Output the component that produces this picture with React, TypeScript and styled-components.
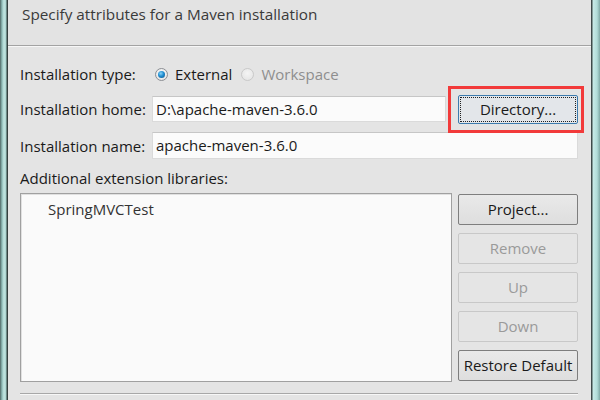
import React from "react";
import styled, { createGlobalStyle } from "styled-components";

const GlobalStyle = createGlobalStyle`
  html, body {
    margin: 0;
    padding: 0;
    background: #e4e4e4;
  }
  #root {
    width: 600px;
    height: 400px;
    overflow: hidden;
  }
`;

const Window = styled.div`
  display: flex;
  width: 600px;
  height: 400px;
  font-family: "Open Sans", "Noto Sans", sans-serif;
  font-size: 15px;
  color: #1a1a1a;
`;

const FrameEdge = styled.div<{ side: "left" | "right" }>`
  flex: 0 0 ${(p) => (p.side === "left" ? "8px" : "9px")};
  background: ${(p) =>
    p.side === "left"
      ? "linear-gradient(90deg, #4f6664 0, #8fbcb8 2px, #c3e6e2 4px, #a9d2ce 6px, #34403f 7px, #34403f 8px)"
      : "linear-gradient(90deg, #3f4a49 0, #3f4a49 1px, #c8ebe7 2px, #b2dcd8 6px, #7fa9a5 9px)"};
`;

const Content = styled.div`
  flex: 1;
  display: flex;
  flex-direction: column;
  background: #e4e4e4;
`;

const Header = styled.div`
  height: 46px;
  padding: 4px 0 0 14px;
  box-sizing: border-box;
  font-size: 15.3px;
  color: #3a3a3a;
  background: #e3e3e3;
  border-bottom: 1px solid #a3a3a3;
  box-shadow: 0 1px 0 #f7f7f7;
`;

const Body = styled.div`
  flex: 1;
  display: flex;
  flex-direction: column;
  padding: 16px 13px 0 12px;
`;

const FormGrid = styled.div`
  display: grid;
  grid-template-columns: 126px 1fr 126px;
  grid-template-rows: 24px 30px 27px;
  column-gap: 6px;
  row-gap: 8px;
  align-items: center;
`;

const Label = styled.label`
  white-space: nowrap;
`;

const RadioGroup = styled.div`
  grid-column: 2 / 4;
  display: flex;
  align-items: center;
  padding-left: 3px;
  gap: 9px;
`;

const RadioOption = styled.div<{ disabled?: boolean }>`
  display: flex;
  align-items: center;
  gap: 7px;
  color: ${(p) => (p.disabled ? "#8e8e8e" : "#1a1a1a")};
`;

const RadioDot = styled.span<{ checked?: boolean; disabled?: boolean }>`
  width: 13px;
  height: 13px;
  border-radius: 50%;
  box-sizing: border-box;
  border: 1px solid ${(p) => (p.disabled ? "#c9c9c9" : "#8c8f94")};
  background: ${(p) =>
    p.disabled
      ? "radial-gradient(circle at 50% 40%, #f4f4f4, #e2e2e2)"
      : "radial-gradient(circle at 50% 40%, #ffffff, #dcdcdc)"};
  display: flex;
  align-items: center;
  justify-content: center;

  &::after {
    content: "";
    display: ${(p) => (p.checked ? "block" : "none")};
    width: 7px;
    height: 7px;
    border-radius: 50%;
    background: radial-gradient(circle at 40% 35%, #8ad3f7 0, #1f8ed1 45%, #0d4f83 100%);
  }
`;

const TextField = styled.input<{ span?: boolean }>`
  grid-column: ${(p) => (p.span ? "2 / 4" : "2 / 3")};
  height: ${(p) => (p.span ? "27px" : "26px")};
  box-sizing: border-box;
  border: 1px solid #dadada;
  border-top-color: #c6c6c6;
  background: #fbfbfb;
  font: inherit;
  color: #1a1a1a;
  padding: 0 4px 1px 3px;
  outline: none;
`;

const Button = styled.button<{ disabled?: boolean; focused?: boolean }>`
  width: 120px;
  height: ${(p) => (p.focused ? "29px" : "31px")};
  box-sizing: border-box;
  border-radius: 2px;
  border: 1px solid ${(p) => (p.disabled ? "#c8c8c8" : p.focused ? "#3d7bad" : "#7e7e7e")};
  background: ${(p) =>
    p.disabled ? "#e5e5e5" : p.focused ? "#e3e6ea" : "linear-gradient(#e9e9e9, #dedede)"};
  color: ${(p) => (p.disabled ? "#9a9a9a" : "#1a1a1a")};
  font: inherit;
  padding: 0 0 1px;
  white-space: nowrap;
  position: relative;

  &::before {
    content: "";
    display: ${(p) => (p.focused ? "block" : "none")};
    position: absolute;
    inset: 1px;
    border: 1px dotted #202020;
  }
`;

const Highlight = styled.div`
  grid-column: 3 / 4;
  justify-self: end;
  position: relative;
  display: flex;

  &::after {
    content: "";
    position: absolute;
    top: -9px;
    bottom: -9px;
    left: -10px;
    right: -6px;
    border: 3px solid #f23a3a;
    pointer-events: none;
  }
`;

const SectionLabel = styled.div`
  margin-top: 10px;
  height: 18px;
  line-height: 18px;
`;

const LibraryArea = styled.div`
  display: flex;
  gap: 6px;
  margin-top: 6px;
`;

const LibraryList = styled.ul`
  flex: 1;
  height: 189px;
  margin: 0;
  padding: 5px 0 0 27px;
  box-sizing: border-box;
  list-style: none;
  background: #fafafa;
  border: 1px solid #a0a0a0;
  box-shadow: inset 1px 1px 0 #e0e0e0;
`;

const LibraryItem = styled.li`
  height: 20px;
  line-height: 20px;
  color: #333;
`;

const ButtonColumn = styled.div`
  display: flex;
  flex-direction: column;
  gap: 8px;
  padding-top: 1px;
`;

const BottomRule = styled.div`
  margin-top: auto;
  margin-bottom: 6px;
  height: 1px;
  background: #a8a8a8;
  box-shadow: 0 1px 0 #f7f7f7;
`;

export default function App() {
  return (
    <>
      <GlobalStyle />
      <Window>
        <FrameEdge side="left" />
        <Content>
          <Header>Specify attributes for a Maven installation</Header>
          <Body>
            <FormGrid>
              <Label>Installation type:</Label>
              <RadioGroup>
                <RadioOption>
                  <RadioDot checked />
                  External
                </RadioOption>
                <RadioOption disabled>
                  <RadioDot disabled />
                  Workspace
                </RadioOption>
              </RadioGroup>

              <Label>Installation home:</Label>
              <TextField defaultValue="D:\apache-maven-3.6.0" />
              <Highlight>
                <Button focused>Directory...</Button>
              </Highlight>

              <Label>Installation name:</Label>
              <TextField span defaultValue="apache-maven-3.6.0" />
            </FormGrid>

            <SectionLabel>Additional extension libraries:</SectionLabel>
            <LibraryArea>
              <LibraryList>
                <LibraryItem>SpringMVCTest</LibraryItem>
              </LibraryList>
              <ButtonColumn>
                <Button>Project...</Button>
                <Button disabled>Remove</Button>
                <Button disabled>Up</Button>
                <Button disabled>Down</Button>
                <Button>Restore Default</Button>
              </ButtonColumn>
            </LibraryArea>
            <BottomRule />
          </Body>
        </Content>
        <FrameEdge side="right" />
      </Window>
    </>
  );
}
